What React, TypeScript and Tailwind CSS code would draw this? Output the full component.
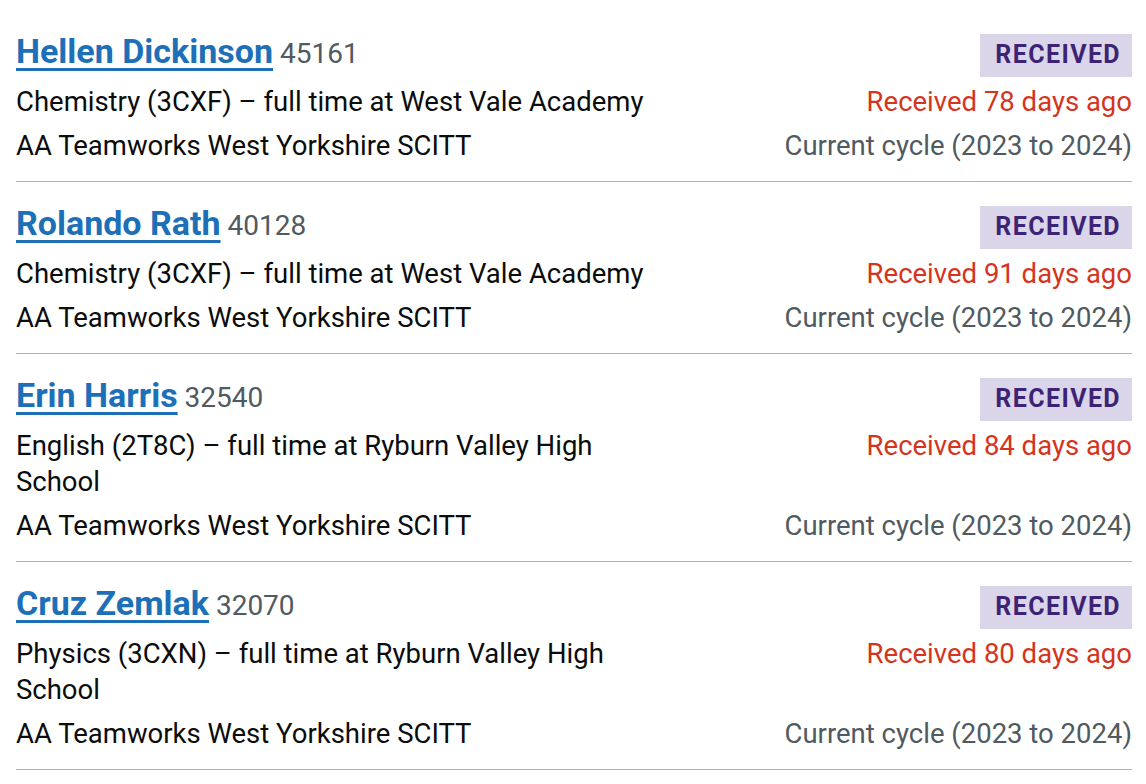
import React from "react";

type App = {
  name: string;
  id: string;
  course: string;
  days: number;
};

const apps: App[] = [
  { name: "Hellen Dickinson", id: "45161", course: "Chemistry (3CXF) – full time at West Vale Academy", days: 78 },
  { name: "Rolando Rath", id: "40128", course: "Chemistry (3CXF) – full time at West Vale Academy", days: 91 },
  { name: "Erin Harris", id: "32540", course: "English (2T8C) – full time at Ryburn Valley High School", days: 84 },
  { name: "Cruz Zemlak", id: "32070", course: "Physics (3CXN) – full time at Ryburn Valley High School", days: 80 },
];

function Row({ a }: { a: App }) {
  return (
    <div className="border-b border-[#b1b4b6] pt-[21px] pb-[17px]">
      <div className="flex items-start justify-between">
        <div className="leading-[40px] whitespace-nowrap">
          <a
            href="#"
            className="text-[34px] font-bold text-[#1d70b8] underline decoration-[3px] underline-offset-[5px]"
          >
            {a.name}
          </a>
          <span className="text-[28px] text-[#505a5f]"> {a.id}</span>
        </div>
        <span className="mt-[3px] block bg-[#dbd5e9] pl-[15px] pr-[11px] pb-[2px] text-[25px] leading-[41px] font-bold uppercase tracking-[1.4px] text-[#3d2375]">
          Received
        </span>
      </div>
      <div className="mt-[6px] flex items-start justify-between text-[27.5px] leading-[36px]">
        <p className="max-w-[650px] text-[#0b0c0c]">{a.course}</p>
        <p className="text-right text-[#d4351c] whitespace-nowrap">Received {a.days} days ago</p>
      </div>
      <div className="mt-[8px] flex items-start justify-between text-[27.5px] leading-[36px]">
        <p className="text-[#0b0c0c]">AA Teamworks West Yorkshire SCITT</p>
        <p className="text-right text-[#505a5f] whitespace-nowrap">Current cycle (2023 to 2024)</p>
      </div>
    </div>
  );
}

export default function App() {
  return (
    <div className="min-h-screen bg-white pt-[10px] pl-[16px] pr-[14px] font-['Roboto','Liberation_Sans',sans-serif]">
      {apps.map((a) => (
        <Row key={a.id} a={a} />
      ))}
    </div>
  );
}
